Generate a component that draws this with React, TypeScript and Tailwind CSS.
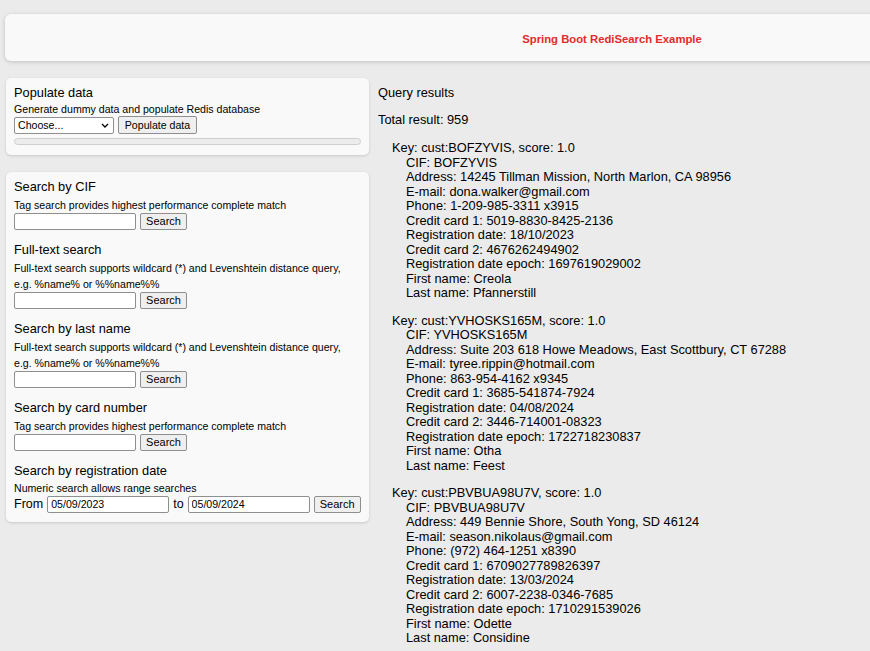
import React from 'react'

const records = [
    {
        key: 'BOFZYVIS',
        address: '14245 Tillman Mission, North Marlon, CA 98956',
        email: 'dona.walker@gmail.com',
        phone: '1-209-985-3311 x3915',
        cc1: '5019-8830-8425-2136',
        regDate: '18/10/2023',
        cc2: '4676262494902',
        epoch: '1697619029002',
        first: 'Creola',
        last: 'Pfannerstill',
    },
    {
        key: 'YVHOSKS165M',
        address: 'Suite 203 618 Howe Meadows, East Scottbury, CT 67288',
        email: 'tyree.rippin@hotmail.com',
        phone: '863-954-4162 x9345',
        cc1: '3685-541874-7924',
        regDate: '04/08/2024',
        cc2: '3446-714001-08323',
        epoch: '1722718230837',
        first: 'Otha',
        last: 'Feest',
    },
    {
        key: 'PBVBUA98U7V',
        address: '449 Bennie Shore, South Yong, SD 46124',
        email: 'season.nikolaus@gmail.com',
        phone: '(972) 464-1251 x8390',
        cc1: '6709027789826397',
        regDate: '13/03/2024',
        cc2: '6007-2238-0346-7685',
        epoch: '1710291539026',
        first: 'Odette',
        last: 'Considine',
    },
]

const SearchButton = ({ label = 'Search' }: { label?: string }) => (
    <button className="h-[17px] w-[47px] text-[11px] leading-none bg-[#efefef] border border-[#8f8f8f] rounded-[2px] text-black">
        {label}
    </button>
)

const TextBox = ({ value = '' }: { value?: string }) => (
    <input
        readOnly
        value={value}
        className="w-[122px] h-[17px] px-[3px] text-[10.6px] bg-white border border-[#8f8f8f] rounded-[2px] outline-none"
    />
)

const Section = ({ title, desc, children }: { title: string; desc: React.ReactNode; children: React.ReactNode }) => (
    <div className="mb-[11px]">
        <div className="text-[12.8px] leading-[17px] mb-[2px]">{title}</div>
        <div className="text-[10.6px] leading-[16px]">{desc}</div>
        <div className="flex items-center gap-[4px]">{children}</div>
    </div>
)

const App = () => {
    return (
        <div className="min-h-screen w-full overflow-hidden bg-[#ebebeb] text-black" style={{ fontFamily: '"Liberation Sans", Arial, sans-serif' }}>
            {/* Header */}
            <div className="pt-[14px] pl-[5px]">
                <div className="w-[1214px] h-[47px] rounded-[6px] bg-[#f9f9f9] shadow-[0_1px_4px_rgba(0,0,0,0.18)] flex items-center justify-center pt-[3px]">
                    <span className="text-[11.3px] font-bold text-[#e32b2b]">Spring Boot RediSearch Example</span>
                </div>
            </div>

            <div className="flex gap-[9px] mt-[17px] pl-[6px]">
                {/* Left column */}
                <div className="w-[363px] shrink-0 flex flex-col gap-[17px]">
                    <div className="bg-[#f9f9f9] rounded-[5px] shadow-[0_1px_3px_rgba(0,0,0,0.15)] px-[8px] pt-[6px] pb-[10px]">
                        <div className="text-[12.8px] leading-[17px] mb-[2px]">Populate data</div>
                        <div className="text-[10.6px] leading-[13px]">Generate dummy data and populate Redis database</div>
                        <div className="flex items-center gap-[4px]">
                            <div className="relative w-[100px] h-[17px] bg-white border border-[#8f8f8f] rounded-[2px] text-[10.6px] leading-[15px] pl-[3px]">
                                Choose...
                                <svg className="absolute right-[4px] top-[5px]" width="8" height="5" viewBox="0 0 8 5">
                                    <path d="M1 1 L4 4 L7 1" fill="none" stroke="#000" strokeWidth="1.3" />
                                </svg>
                            </div>
                            <button className="h-[18px] w-[79px] text-[10.6px] leading-none bg-[#efefef] border border-[#8f8f8f] rounded-[2px]">
                                Populate data
                            </button>
                        </div>
                        <div className="mt-[4px] h-[7px] rounded-full bg-[#ececec] border border-[#cfcfcf]" />
                    </div>

                    <div className="bg-[#f9f9f9] rounded-[5px] shadow-[0_1px_3px_rgba(0,0,0,0.15)] px-[8px] pt-[6px] pb-[8px]">
                        <Section title="Search by CIF" desc="Tag search provides highest performance complete match">
                            <TextBox />
                            <SearchButton />
                        </Section>
                        <Section
                            title="Full-text search"
                            desc={<>Full-text search supports wildcard (*) and Levenshtein distance query,<br />e.g. %name% or %%name%%</>}
                        >
                            <TextBox />
                            <SearchButton />
                        </Section>
                        <Section
                            title="Search by last name"
                            desc={<>Full-text search supports wildcard (*) and Levenshtein distance query,<br />e.g. %name% or %%name%%</>}
                        >
                            <TextBox />
                            <SearchButton />
                        </Section>
                        <Section title="Search by card number" desc="Tag search provides highest performance complete match">
                            <TextBox />
                            <SearchButton />
                        </Section>
                        <div>
                            <div className="text-[12.8px] leading-[17px] mb-[2px]">Search by registration date</div>
                            <div className="text-[10.6px] leading-[14px]">Numeric search allows range searches</div>
                            <div className="flex items-center text-[12.5px]">
                                <span className="mr-[4px]">From</span>
                                <TextBox value="05/09/2023" />
                                <span className="ml-[4px] mr-[4px]">to</span>
                                <TextBox value="05/09/2024" />
                                <span className="ml-[4px]"><SearchButton /></span>
                            </div>
                        </div>
                    </div>
                </div>

                {/* Right column */}
                <div className="pt-[8px] text-[12.8px] leading-[14.5px]">
                    <div className="mb-[12px]">Query results</div>
                    <div className="mb-[14px]">Total result: 959</div>
                    {records.map(r => (
                        <div key={r.key} className="mb-[13px] pl-[14px]">
                            <div>Key: cust:{r.key}, score: 1.0</div>
                            <div className="pl-[14px]">
                                <div>CIF: {r.key}</div>
                                <div>Address: {r.address}</div>
                                <div>E-mail: {r.email}</div>
                                <div>Phone: {r.phone}</div>
                                <div>Credit card 1: {r.cc1}</div>
                                <div>Registration date: {r.regDate}</div>
                                <div>Credit card 2: {r.cc2}</div>
                                <div>Registration date epoch: {r.epoch}</div>
                                <div>First name: {r.first}</div>
                                <div>Last name: {r.last}</div>
                            </div>
                        </div>
                    ))}
                </div>
            </div>
        </div>
    )
}

export default App
